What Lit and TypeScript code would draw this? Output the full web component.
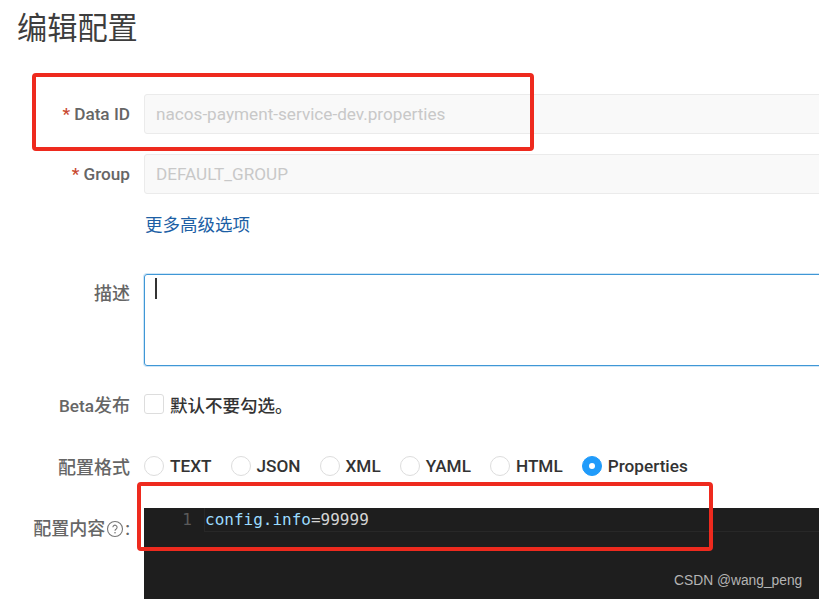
import { LitElement, html, css } from "lit";
import { customElement } from "lit/decorators.js";

const FORMATS = ["TEXT", "JSON", "XML", "YAML", "HTML", "Properties"];

@customElement("app-root")
export class AppRoot extends LitElement {
  static styles = css`
    :host {
      display: block;
      position: relative;
      width: 819px;
      height: 599px;
      overflow: hidden;
      background: #fff;
      font-family: Roboto, "Noto Sans CJK SC", sans-serif;
      color: #333;
    }
    h1 {
      margin: 0;
      padding: 8px 0 0 17px;
      height: 86px;
      box-sizing: border-box;
      font-size: 30.2px;
      line-height: 42px;
      font-weight: 400;
      color: #3d3d3d;
    }
    .row {
      display: grid;
      grid-template-columns: 130px 760px;
      column-gap: 14px;
      align-items: center;
    }
    .label {
      text-align: right;
      font-size: 17.2px;
      font-weight: 500;
      color: #666;
      white-space: nowrap;
    }
    .zh { font-size: 18px; }
    .star { color: #c9492f; margin-right: 4px; }
    .input {
      box-sizing: border-box;
      height: 40px;
      padding: 0 11px;
      border: 1px solid #ebebeb;
      border-radius: 3px;
      background: #f9f9f9;
      color: #c8c8c8;
      font-size: 17.15px;
      line-height: 38px;
      white-space: nowrap;
    }
    .r1 { margin-top: 8px; }
    .r2 { margin-top: 20px; }
    .r3 { margin-top: 21px; }
    .link { color: #1d5fa5; font-size: 17.5px; line-height: 20px; padding-left: 1px; }
    .r4 { margin-top: 39px; align-items: start; }
    .r4 .label { padding-top: 9px; line-height: 22px; }
    .textarea {
      box-sizing: border-box;
      height: 92px;
      padding: 3px 10px;
      border: 1px solid #3f97d6;
      border-radius: 3px;
      box-shadow: 0 0 0 1px #cfe6f7;
    }
    .caret { width: 2px; height: 21px; background: #333; }
    .r5 { margin-top: 25px; }
    .check {
      display: flex;
      align-items: center;
      gap: 6px;
      font-size: 17.5px;
      font-weight: 500;
      color: #333;
    }
    .box {
      box-sizing: border-box;
      width: 20px;
      height: 20px;
      border: 1px solid #ddd;
      border-radius: 3px;
    }
    .r6 { margin-top: 36px; }
    .radios { display: flex; align-items: center; gap: 19px; }
    .radio {
      display: flex;
      align-items: center;
      gap: 6px;
      font-size: 17.2px;
      font-weight: 500;
      color: #333;
    }
    .dot {
      box-sizing: border-box;
      width: 20px;
      height: 20px;
      border: 1px solid #ddd;
      border-radius: 50%;
      display: flex;
      align-items: center;
      justify-content: center;
    }
    .dot.on { background: #209bfa; border-color: #209bfa; }
    .dot.on::after {
      content: "";
      width: 6px;
      height: 6px;
      border-radius: 50%;
      background: #fff;
    }
    .r7 { margin-top: 29px; align-items: start; }
    .r7 .label {
      display: flex;
      justify-content: flex-end;
      align-items: center;
      gap: 1px;
      padding-top: 9px;
      line-height: 24px;
    }
    .help { display: block; }
    .editor {
      height: 91px;
      background: #1e1e1e;
      display: flex;
      align-items: flex-start;
    }
    .gutter {
      width: 60px;
      padding-right: 12px;
      box-sizing: border-box;
      text-align: right;
      color: #5a5a5a;
      font: 16px/23px "DejaVu Sans Mono", monospace;
    }
    .line {
      flex: 1;
      height: 23px;
      border: 1px solid #282828;
      border-width: 0 0 1px 1px;
      font: 16px/23px "DejaVu Sans Mono", monospace;
      color: #d4d4d4;
      white-space: pre;
    }
    .key { color: #9cdcfe; }
    .mark {
      position: absolute;
      box-sizing: border-box;
      border: 4px solid #ee2a1e;
      border-radius: 4px;
      pointer-events: none;
    }
    .m1 { left: 32px; top: 73px; width: 502px; height: 78px; }
    .m2 { left: 137px; top: 482px; width: 576px; height: 69px; }
    .wm {
      position: absolute;
      left: 674px;
      top: 572px;
      font: 13.8px/18px "Liberation Sans", sans-serif;
      color: #b4b4b4;
      white-space: nowrap;
    }
  `;

  render() {
    return html`
      <h1>编辑配置</h1>
      <div class="row r1">
        <div class="label"><span class="star">*</span>Data ID</div>
        <div class="input">nacos-payment-service-dev.properties</div>
      </div>
      <div class="row r2">
        <div class="label"><span class="star">*</span>Group</div>
        <div class="input">DEFAULT_GROUP</div>
      </div>
      <div class="row r3">
        <div></div>
        <div class="link">更多高级选项</div>
      </div>
      <div class="row r4">
        <div class="label zh">描述</div>
        <div class="textarea"><div class="caret"></div></div>
      </div>
      <div class="row r5">
        <div class="label">Beta<span class="zh">发布</span></div>
        <div class="check"><span class="box"></span>默认不要勾选。</div>
      </div>
      <div class="row r6">
        <div class="label zh">配置格式</div>
        <div class="radios">
          ${FORMATS.map(
            (f) => html`<div class="radio">
              <span class="dot ${f === "Properties" ? "on" : ""}"></span>${f}
            </div>`
          )}
        </div>
      </div>
      <div class="row r7">
        <div class="label zh">
          配置内容
          <svg class="help" width="18" height="18" viewBox="0 0 18 18" fill="none">
            <circle cx="9" cy="9" r="7.5" stroke="#777" stroke-width="1.1"></circle>
            <path d="M6.9 7.3a2.1 2.1 0 1 1 3.3 1.7c-.8.5-1.2.9-1.2 1.8" stroke="#777" stroke-width="1.1"></path>
            <circle cx="9" cy="12.8" r=".8" fill="#777"></circle>
          </svg>
          :
        </div>
        <div class="editor">
          <div class="gutter">1</div>
          <div class="line"><span class="key">config.info</span>=99999</div>
        </div>
      </div>
      <div class="mark m1"></div>
      <div class="mark m2"></div>
      <div class="wm">CSDN @wang_peng</div>
    `;
  }
}
